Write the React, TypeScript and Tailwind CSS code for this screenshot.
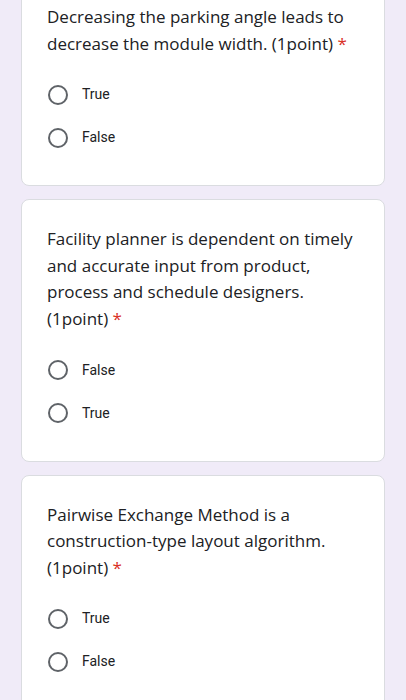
import type React from 'react';

interface Question {
  title: string;
  options: string[];
}

const questions: Question[] = [
  {
    title: 'Decreasing the parking angle leads to decrease the module width. (1point)',
    options: ['True', 'False'],
  },
  {
    title:
      'Facility planner is dependent on timely and accurate input from product, process and schedule designers. (1point)',
    options: ['False', 'True'],
  },
  {
    title: 'Pairwise Exchange Method is a construction-type layout algorithm. (1point)',
    options: ['True', 'False'],
  },
];

const QuestionCard: React.FC<{ question: Question }> = ({ question }) => (
  <div className="rounded-lg border border-[#dadce0] bg-white px-[25px] pt-[26px] pb-[26px]">
    <p
      className="text-[17px] leading-[26.6px] text-[#202124]"
      style={{ fontFamily: '"Open Sans", Roboto, sans-serif' }}
    >
      {question.title}
      <span className="text-[#d93025]">&nbsp;*</span>
    </p>
    <div className="mt-[16px]">
      {question.options.map((opt) => (
        <label key={opt} className="flex h-[43px] items-center gap-[14px]">
          <span className="ml-px h-5 w-5 shrink-0 rounded-full border-2 border-[#5f6368]" />
          <span
            className="text-[14px] text-[#202124]"
            style={{ fontFamily: 'Roboto, "Liberation Sans", sans-serif' }}
          >
            {opt}
          </span>
        </label>
      ))}
    </div>
  </div>
);

export default function App() {
  return (
    <div className="min-h-[700px] overflow-hidden bg-[#f0ebf8]">
      <div className="-mt-[23px] flex flex-col gap-[13px] px-[21px]">
        {questions.map((q) => (
          <QuestionCard key={q.title} question={q} />
        ))}
      </div>
    </div>
  );
}
